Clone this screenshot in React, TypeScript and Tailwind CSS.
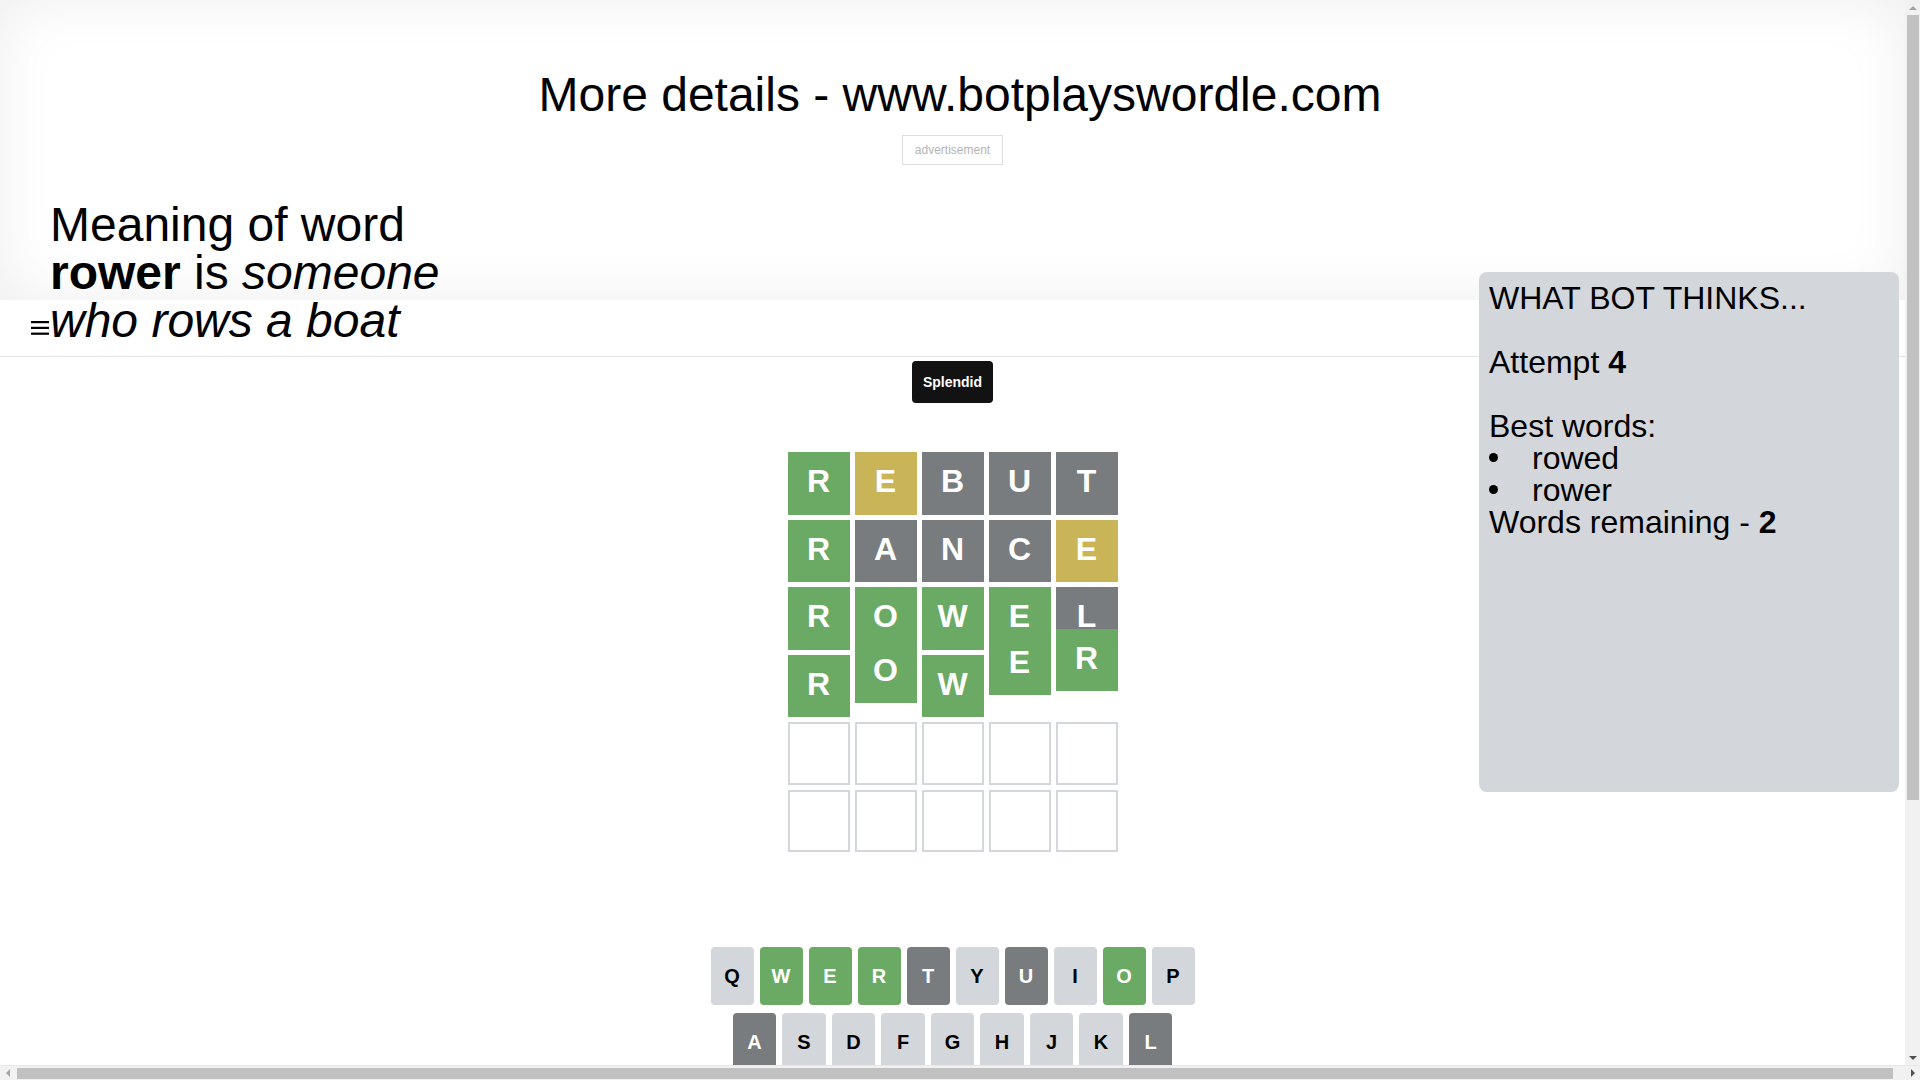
import React from 'react';

type Cell = [string, 'g' | 'y' | 'x' | ''];

const tileColor: Record<string, string> = {
  g: 'bg-[#6aaa64] border-[#6aaa64] text-white',
  y: 'bg-[#c9b458] border-[#c9b458] text-white',
  x: 'bg-[#787c7e] border-[#787c7e] text-white',
  '': 'bg-white border-[#d3d6da] text-black',
};

const keyColor: Record<string, string> = {
  g: 'bg-[#6aaa64] text-white',
  x: 'bg-[#787c7e] text-white',
  l: 'bg-[#d3d6da] text-black',
};

const empty: Cell[] = [['', ''], ['', ''], ['', ''], ['', ''], ['', '']];

const board: Cell[][] = [
  [['R', 'g'], ['E', 'y'], ['B', 'x'], ['U', 'x'], ['T', 'x']],
  [['R', 'g'], ['A', 'x'], ['N', 'x'], ['C', 'x'], ['E', 'y']],
  [['R', 'g'], ['O', 'g'], ['W', 'g'], ['E', 'g'], ['L', 'x']],
  [['R', 'g'], ['O', 'g'], ['W', 'g'], ['E', 'g'], ['R', 'g']],
  empty,
  empty,
];

// winning row is mid-bounce
const bounce = ['', '-translate-y-[14px]', '', '-translate-y-[22px]', '-translate-y-[26px]'];

const keys: [string, string][][] = [
  [['Q', 'l'], ['W', 'g'], ['E', 'g'], ['R', 'g'], ['T', 'x'], ['Y', 'l'], ['U', 'x'], ['I', 'l'], ['O', 'g'], ['P', 'l']],
  [['A', 'x'], ['S', 'l'], ['D', 'l'], ['F', 'l'], ['G', 'l'], ['H', 'l'], ['J', 'l'], ['K', 'l'], ['L', 'x']],
  [['ENTER', 'l'], ['Z', 'l'], ['X', 'l'], ['C', 'x'], ['V', 'l'], ['B', 'x'], ['N', 'x'], ['M', 'l'], ['⌫', 'l']],
];

function Hamburger() {
  return (
    <svg width="18" height="14" viewBox="0 0 18 14" fill="#000">
      <rect x="0" y="0" width="18" height="2.2" />
      <rect x="0" y="5.8" width="18" height="2.2" />
      <rect x="0" y="11.6" width="18" height="2.2" />
    </svg>
  );
}

// little scrollbar arrow
function Arrow({ dir, dim }: { dir: 'up' | 'down' | 'left' | 'right'; dim?: boolean }) {
  const pts = {
    up: '4,1 8,5 0,5',
    down: '0,1 8,1 4,5',
    left: '5,0 5,8 1,4',
    right: '1,0 1,8 5,4',
  }[dir];
  const vertical = dir === 'up' || dir === 'down';
  return (
    <div className="flex h-[15px] w-[15px] shrink-0 items-center justify-center">
      <svg width={vertical ? 8 : 6} height={vertical ? 6 : 8} viewBox={vertical ? '0 0 8 6' : '0 0 6 8'}>
        <polygon points={pts} fill={dim ? '#a3a3a3' : '#505050'} />
      </svg>
    </div>
  );
}

function Page() {
  return (
    <div className="relative">
      <header className="h-[300px] w-full shadow-[inset_0_0_60px_rgba(0,0,0,0.07)]">
        <h1 className="w-[1920px] pt-[71px] text-center text-5xl leading-none font-normal">
          More details - www.botplayswordle.com
        </h1>
        <div className="mx-auto mt-[16px] flex h-[30px] w-[101px] items-center justify-center border border-[#dddddd] text-[12px] text-[#b5b5b5]">
          advertisement
        </div>
        <div className="ml-[50px] mt-[36px] w-[440px] text-5xl leading-none">
          Meaning of word <b>rower</b> is <i>someone who rows a boat</i>
        </div>
      </header>

      <nav className="flex h-[57px] items-center border-b border-[#e6e6e6] pl-[31px]">
        <Hamburger />
      </nav>

      <main className="flex flex-col items-center">
        <div className="mt-[4px] flex h-[42px] w-[81px] items-center justify-center rounded-[4px] bg-[#121212] text-[14px] font-bold text-white">
          Splendid
        </div>

        <div className="mt-[49px] grid h-[400px] w-[330px] grid-rows-6 gap-[5px]">
          {board.map((row, r) => (
            <div key={r} className="grid grid-cols-5 gap-[5px]">
              {row.map(([letter, c], i) => (
                <div
                  key={i}
                  className={`flex items-center justify-center border-2 pb-[4px] text-[32px] font-bold leading-none ${tileColor[c]} ${r === 3 ? bounce[i] : ''}`}
                >
                  {letter}
                </div>
              ))}
            </div>
          ))}
        </div>

        <div className="mt-[95px] flex flex-col items-center gap-[8px] pb-[268px]">
          {keys.map((row, r) => (
            <div key={r} className="flex gap-[6px]">
              {row.map(([k, c]) => (
                <div
                  key={k}
                  className={`flex h-[58px] items-center justify-center rounded-[4px] font-bold ${k.length > 1 ? 'w-[65px] text-[12px]' : r === 1 ? 'w-[43.5px] text-[20px]' : 'w-[43px] text-[20px]'} ${keyColor[c]}`}
                >
                  {k}
                </div>
              ))}
            </div>
          ))}
        </div>
      </main>

      <aside className="absolute right-[6px] top-[272px] h-[520px] w-[420px] rounded-lg bg-[#d3d6da] p-[10px] text-[32px] leading-[32px]">
        <div>WHAT BOT THINKS...</div>
        <div className="h-[32px]" />
        <div>
          Attempt <b>4</b>
        </div>
        <div className="h-[32px]" />
        <div>Best words:</div>
        <ul>
          {['rowed', 'rower'].map((w) => (
            <li key={w} className="flex items-center">
              <span className="flex w-[43px] items-center">
                <span className="mt-[-2px] h-[9px] w-[9px] rounded-full bg-black" />
              </span>
              {w}
            </li>
          ))}
        </ul>
        <div>
          Words remaining - <b>2</b>
        </div>
      </aside>
    </div>
  );
}

export default function App() {
  return (
    <div className="flex h-screen w-screen flex-col overflow-hidden bg-white text-black font-['Liberation_Sans',Arial,sans-serif]">
      <div className="flex h-[1065px]">
        <div className="h-full w-[1905px] overflow-hidden">
          <Page />
        </div>
        {/* vertical scrollbar */}
        <div className="flex h-full w-[15px] flex-col bg-[#f1f1f1]">
          <Arrow dir="up" dim />
          <div className="flex flex-1 flex-col">
            <div className="ml-[2px] mr-[1px] h-[785px] bg-[#c1c1c1]" />
          </div>
          <Arrow dir="down" />
        </div>
      </div>
      {/* horizontal scrollbar */}
      <div className="flex h-[15px] w-full items-center border-t border-[#e8e8e8] bg-[#f1f1f1]">
        <Arrow dir="left" dim />
        <div className="flex flex-1 items-center pl-[2px]">
          <div className="h-[11px] w-[1876px] bg-[#c1c1c1]" />
        </div>
        <Arrow dir="right" />
      </div>
    </div>
  );
}
